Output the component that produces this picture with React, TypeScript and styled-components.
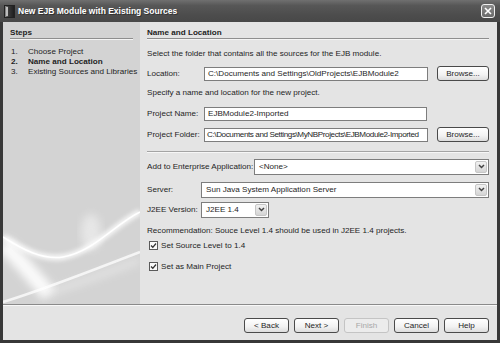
import React from "react";
import styled, { createGlobalStyle } from "styled-components";

const GlobalStyle = createGlobalStyle`
  html, body {
    margin: 0;
    padding: 0;
    background: #3a3a3a;
  }
`;

const Window = styled.div`
  width: 500px;
  height: 343px;
  display: flex;
  flex-direction: column;
  background: #383838;
  font-family: "Liberation Sans", Arial, sans-serif;
  font-size: 8.1px;
  color: #1e1e1e;
  overflow: hidden;
`;

const TitleBar = styled.div`
  height: 22px;
  flex: none;
  display: flex;
  align-items: center;
  gap: 3px;
  padding: 0 5px 0 4px;
  background: linear-gradient(#707070, #575757 25%, #4c4c4c 70%, #484848);
`;

const TitleText = styled.div`
  color: #fff;
  font-weight: bold;
  font-size: 8.5px;
  text-shadow: 1px 1px 0 #333;
`;

const CloseButton = styled.div`
  margin-left: auto;
  width: 14px;
  height: 14px;
  box-sizing: border-box;
  border: 1px solid #f0f0f0;
  border-radius: 3px;
  background: linear-gradient(#8a8a8a, #6a6a6a);
  display: flex;
  align-items: center;
  justify-content: center;
`;

const Client = styled.div`
  flex: 1;
  margin: 0 3px 3px 3px;
  display: flex;
  flex-direction: column;
  background: #e4e4e4;
  min-height: 0;
`;

const Main = styled.div`
  flex: 1;
  display: flex;
  min-height: 0;
`;

const StepsPanel = styled.div`
  width: 137px;
  flex: none;
  background: #d3d3d3;
  display: flex;
  flex-direction: column;
  overflow: hidden;
`;

const StepsContent = styled.div`
  padding: 6px 7px 0 7px;
`;

const Heading = styled.div`
  font-weight: bold;
  line-height: 10px;
  height: 10px;
  border-bottom: 1px solid #8e8e8e;
  box-shadow: 0 1px 0 #f4f4f4;
`;

const StepList = styled.div`
  margin-top: 8px;
  display: flex;
  flex-direction: column;
`;

const Step = styled.div<{ $current?: boolean }>`
  display: flex;
  line-height: 10px;
  white-space: nowrap;
  font-weight: ${(p) => (p.$current ? "bold" : "normal")};
`;

const StepNum = styled.span`
  width: 17px;
  padding-left: 1px;
  flex: none;
`;

const Swoosh = styled.svg`
  display: block;
  margin-top: auto;
  flex: none;
`;

const FormPanel = styled.div`
  flex: 1;
  min-width: 0;
  padding: 6px 8px 0 7px;
  display: flex;
  flex-direction: column;
`;

const Para = styled.div<{ $top: number }>`
  line-height: 10px;
  margin-top: ${(p) => p.$top}px;
  white-space: nowrap;
`;

const Row = styled.div<{ $top: number }>`
  display: flex;
  align-items: center;
  height: 15px;
  margin-top: ${(p) => p.$top}px;
`;

const Label = styled.div<{ $w: number }>`
  width: ${(p) => p.$w}px;
  flex: none;
  white-space: nowrap;
`;

const TextField = styled.div<{ $w?: number; $tight?: boolean }>`
  ${(p) => (p.$w ? `width: ${p.$w}px;` : "flex: 1;")}
  min-width: 0;
  height: 14px;
  box-sizing: border-box;
  border: 1px solid #7d7d7d;
  background: #fff;
  padding-left: ${(p) => (p.$tight ? 2 : 3)}px;
  letter-spacing: ${(p) => (p.$tight ? "-0.4px" : "normal")};
  line-height: 12px;
  white-space: nowrap;
  overflow: hidden;
`;

const Button = styled.div<{ $disabled?: boolean; $w?: number }>`
  width: ${(p) => p.$w ?? 45}px;
  height: 15px;
  flex: none;
  box-sizing: border-box;
  border: 1px solid ${(p) => (p.$disabled ? "#c4c4c4" : "#4a4a4a")};
  border-radius: 3px;
  background: ${(p) =>
    p.$disabled
      ? "#ececec"
      : "linear-gradient(#ffffff, #f2f2f2 60%, #dcdcdc)"};
  color: ${(p) => (p.$disabled ? "#a8a8a8" : "#1e1e1e")};
  display: flex;
  align-items: center;
  justify-content: center;
`;

const BrowseButton = styled(Button)`
  margin-left: 9px;
`;

const Combo = styled.div<{ $w?: number }>`
  ${(p) => (p.$w ? `width: ${p.$w}px;` : "flex: 1;")}
  min-width: 0;
  height: 16px;
  box-sizing: border-box;
  border: 1px solid #7d7d7d;
  background: #fff;
  display: flex;
  align-items: center;
  padding: 1px;
`;

const ComboText = styled.div`
  flex: 1;
  padding-left: 3px;
  white-space: nowrap;
`;

const ComboArrow = styled.div`
  width: 12px;
  height: 12px;
  border-radius: 2px;
  background: linear-gradient(#f2f2f2, #d4d4d4);
  border: 1px solid #c6c6c6;
  box-sizing: border-box;
  display: flex;
  align-items: center;
  justify-content: center;
`;

const Divider = styled.div<{ $top: number }>`
  margin-top: ${(p) => p.$top}px;
  border-top: 1px solid #a4a4a4;
  border-bottom: 1px solid #f6f6f6;
`;

const CheckRow = styled.div<{ $top: number }>`
  display: flex;
  align-items: center;
  gap: 3px;
  height: 10px;
  margin-top: ${(p) => p.$top}px;
  padding-left: 2px;
`;

const CheckBox = styled.div`
  width: 9px;
  height: 9px;
  box-sizing: border-box;
  border: 1px solid #5a5a5a;
  background: #fafafa;
  display: flex;
  align-items: center;
  justify-content: center;
`;

const BottomRule = styled.div`
  border-top: 1px solid #8a8a8a;
  border-bottom: 1px solid #f8f8f8;
`;

const ButtonBar = styled.div`
  height: 34px;
  flex: none;
  display: flex;
  justify-content: flex-end;
  align-items: flex-start;
  gap: 5px;
  padding: 12px 8px 0 0;
  box-sizing: border-box;
`;

const Chevron = () => (
  <svg width="7" height="5" viewBox="0 0 7 5">
    <path d="M1 1 L3.5 3.5 L6 1" fill="none" stroke="#444" strokeWidth="1.5" />
  </svg>
);

const Check = () => (
  <svg width="7" height="7" viewBox="0 0 7 7">
    <path d="M1 3.5 L2.8 5.3 L6 1.5" fill="none" stroke="#333" strokeWidth="1.3" />
  </svg>
);

const ComboBox = ({ value, w }: { value: string; w?: number }) => (
  <Combo $w={w}>
    <ComboText>{value}</ComboText>
    <ComboArrow>
      <Chevron />
    </ComboArrow>
  </Combo>
);

const steps = ["Choose Project", "Name and Location", "Existing Sources and Libraries"];

export default function App() {
  return (
    <>
      <GlobalStyle />
      <Window>
        <TitleBar>
          <svg width="11" height="13" viewBox="0 0 11 13">
            <defs>
              <linearGradient id="ic" x1="0" x2="1" y1="0" y2="0">
                <stop offset="0" stopColor="#9a9a9a" />
                <stop offset="0.4" stopColor="#3a3a3a" />
                <stop offset="1" stopColor="#1c1c1c" />
              </linearGradient>
            </defs>
            <rect x="0.5" y="0.5" width="10" height="12" fill="url(#ic)" stroke="#222" />
            <rect x="2" y="2" width="2" height="9" fill="#bdbdbd" />
          </svg>
          <TitleText>New EJB Module with Existing Sources</TitleText>
          <CloseButton>
            <svg width="8" height="8" viewBox="0 0 8 8">
              <path d="M1 1 L7 7 M7 1 L1 7" stroke="#fff" strokeWidth="1.6" />
            </svg>
          </CloseButton>
        </TitleBar>
        <Client>
          <Main>
            <StepsPanel>
              <StepsContent>
                <Heading>Steps</Heading>
                <StepList>
                  {steps.map((s, i) => (
                    <Step key={s} $current={i === 1}>
                      <StepNum>{i + 1}.</StepNum>
                      {s}
                    </Step>
                  ))}
                </StepList>
              </StepsContent>
              <Swoosh width="137" height="110" viewBox="0 0 137 110">
                <defs>
                  <filter id="b4" x="-20%" y="-50%" width="140%" height="200%">
                    <feGaussianBlur stdDeviation="4" />
                  </filter>
                  <filter id="b2" x="-20%" y="-50%" width="140%" height="200%">
                    <feGaussianBlur stdDeviation="2" />
                  </filter>
                  <filter id="b1" x="-20%" y="-50%" width="140%" height="200%">
                    <feGaussianBlur stdDeviation="0.7" />
                  </filter>
                </defs>
                <path d="M0 50 C14 62 28 80 46 100" stroke="#fff" strokeWidth="16" fill="none" opacity="0.9" filter="url(#b4)" />
                <path d="M0 43 C20 56 40 66 60 63 C90 58 112 30 137 18" stroke="#fff" strokeWidth="6" fill="none" opacity="0.8" filter="url(#b2)" />
                <path d="M0 43 C20 56 40 66 60 63 C90 58 112 30 137 18" stroke="#fff" strokeWidth="1.5" fill="none" filter="url(#b1)" />
                <path d="M0 108 C40 96 90 76 137 58" stroke="#fff" strokeWidth="2.5" fill="none" opacity="0.75" filter="url(#b1)" />
                <path d="M40 100 C70 92 100 80 137 66" stroke="#fff" strokeWidth="6" fill="none" opacity="0.4" filter="url(#b4)" />
                <ellipse cx="88" cy="38" rx="10" ry="18" fill="#fff" opacity="0.45" filter="url(#b4)" />
              </Swoosh>
            </StepsPanel>
            <FormPanel>
              <Heading>Name and Location</Heading>
              <Para $top={10}>Select the folder that contains all the sources for the EJB module.</Para>
              <Row $top={7}>
                <Label $w={57}>Location:</Label>
                <TextField>C:\Documents and Settings\OldProjects\EJBModule2</TextField>
                <BrowseButton $w={52}>Browse...</BrowseButton>
              </Row>
              <Para $top={7}>Specify a name and location for the new project.</Para>
              <Row $top={8}>
                <Label $w={57}>Project Name:</Label>
                <TextField $w={223}>EJBModule2-Imported</TextField>
              </Row>
              <Row $top={6}>
                <Label $w={57}>Project Folder:</Label>
                <TextField $tight>C:\Documents and Settings\MyNBProjects\EJBModule2-Imported</TextField>
                <BrowseButton $w={52}>Browse...</BrowseButton>
              </Row>
              <Divider $top={9} />
              <Row $top={6}>
                <Label $w={107}>Add to Enterprise Application:</Label>
                <ComboBox value="<None>" />
              </Row>
              <Row $top={8}>
                <Label $w={54}>Server:</Label>
                <ComboBox value="Sun Java System Application Server" />
              </Row>
              <Row $top={5}>
                <Label $w={54}>J2EE Version:</Label>
                <ComboBox value="J2EE 1.4" w={68} />
              </Row>
              <Para $top={9}>Recommendation: Souce Level 1.4 should be used in J2EE 1.4 projects.</Para>
              <CheckRow $top={4}>
                <CheckBox>
                  <Check />
                </CheckBox>
                Set Source Level to 1.4
              </CheckRow>
              <CheckRow $top={11}>
                <CheckBox>
                  <Check />
                </CheckBox>
                Set as Main Project
              </CheckRow>
            </FormPanel>
          </Main>
          <BottomRule />
          <ButtonBar>
            <Button>&lt; Back</Button>
            <Button>Next &gt;</Button>
            <Button $disabled>Finish</Button>
            <Button>Cancel</Button>
            <Button>Help</Button>
          </ButtonBar>
        </Client>
      </Window>
    </>
  );
}
